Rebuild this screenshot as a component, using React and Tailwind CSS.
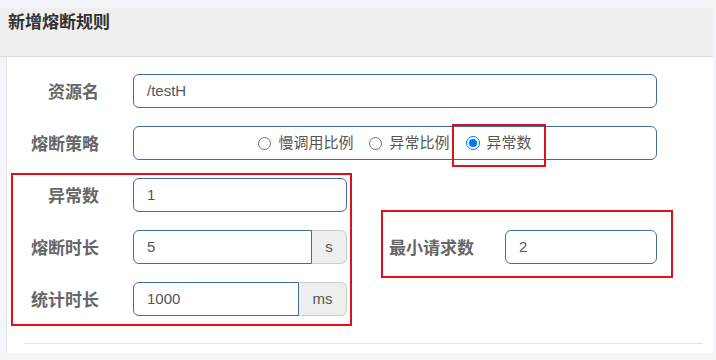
import * as React from "react";

const font = { fontFamily: '"Liberation Sans", "Noto Sans CJK SC", sans-serif' };

function Label({ children, className = "" }) {
  return (
    <div className={"shrink-0 whitespace-nowrap pt-[3px] text-right text-[17px] font-bold text-[#666] " + className}>
      {children}
    </div>
  );
}

function TextInput({ value, className = "" }) {
  return (
    <div
      className={
        "flex h-[34px] items-center rounded-[6px] border border-[#3f6f9f] bg-white px-[13px] text-[15px] text-[#555] " +
        className
      }
    >
      {value}
    </div>
  );
}

function AddonInput({ value, unit, inputWidth }) {
  return (
    <div className="flex h-[34px] w-[214px]">
      <div
        className={
          "flex h-full items-center rounded-l-[6px] border border-[#3f6f9f] bg-white px-[13px] text-[15px] text-[#555] " +
          inputWidth
        }
      >
        {value}
      </div>
      <div className="flex h-full flex-1 items-center justify-center rounded-r-[6px] border border-l-0 border-[#ccc] bg-[#eee] text-[15px] text-[#555]">
        {unit}
      </div>
    </div>
  );
}

function Radio({ label, checked }) {
  return (
    <label className="flex items-center gap-[7px]">
      {checked ? (
        <span className="flex h-[14px] w-[14px] items-center justify-center rounded-full border-[1.5px] border-[#0075ff] bg-white">
          <span className="h-[8px] w-[8px] rounded-full bg-[#0075ff]"></span>
        </span>
      ) : (
        <span className="h-[13px] w-[13px] rounded-full border border-[#767676] bg-white"></span>
      )}
      <span className="text-[15px] text-[#555]">{label}</span>
    </label>
  );
}

export default function App() {
  return (
    <div className="h-[360px] w-[716px] overflow-hidden bg-[#f4f5f9] pt-[8px]" style={font}>
      <div className="h-[49px] w-[713px] border-b border-[#dcdcdc] bg-[#efefef] pl-[8px] pt-[3px]">
        <h4 className="text-[17px] font-bold leading-[24px] text-[#333]">新增熔断规则</h4>
      </div>
      <div className="relative ml-[6px] h-[296px] w-[707px] border-l border-[#e6e6e6] bg-white pt-[17px]">
        <div className="flex flex-col gap-[18px]">
          <div className="flex items-center gap-[34px]">
            <Label className="w-[92px]">资源名</Label>
            <TextInput value="/testH" className="w-[524px]" />
          </div>
          <div className="flex items-center gap-[34px]">
            <Label className="w-[92px]">熔断策略</Label>
            <div className="flex h-[34px] w-[524px] items-center justify-center gap-[16px] rounded-[6px] border border-[#3f6f9f]">
              <Radio label="慢调用比例" />
              <Radio label="异常比例" />
              <Radio label="异常数" checked />
            </div>
          </div>
          <div className="flex items-center gap-[34px]">
            <Label className="w-[92px]">异常数</Label>
            <TextInput value="1" className="w-[214px]" />
          </div>
          <div className="flex items-center">
            <Label className="w-[92px]">熔断时长</Label>
            <div className="ml-[34px]">
              <AddonInput value="5" unit="s" inputWidth="w-[179px]" />
            </div>
            <Label className="ml-[42px] w-[85px] text-left">最小请求数</Label>
            <TextInput value="2" className="ml-[31px] w-[152px]" />
          </div>
          <div className="flex items-center gap-[34px]">
            <Label className="w-[92px]">统计时长</Label>
            <AddonInput value="1000" unit="ms" inputWidth="w-[166px]" />
          </div>
        </div>
        <div className="ml-[17px] mr-[10px] mt-[27px] border-t border-[#e5e5e5]"></div>

        <div className="pointer-events-none absolute left-[445px] top-[67px] h-[43px] w-[94px] border-2 border-[#e0101b]"></div>
        <div className="pointer-events-none absolute left-[4px] top-[116px] h-[153px] w-[341px] border-2 border-[#e0101b]"></div>
        <div className="pointer-events-none absolute left-[374px] top-[153px] h-[68px] w-[292px] border-2 border-[#e0101b]"></div>
      </div>
    </div>
  );
}
